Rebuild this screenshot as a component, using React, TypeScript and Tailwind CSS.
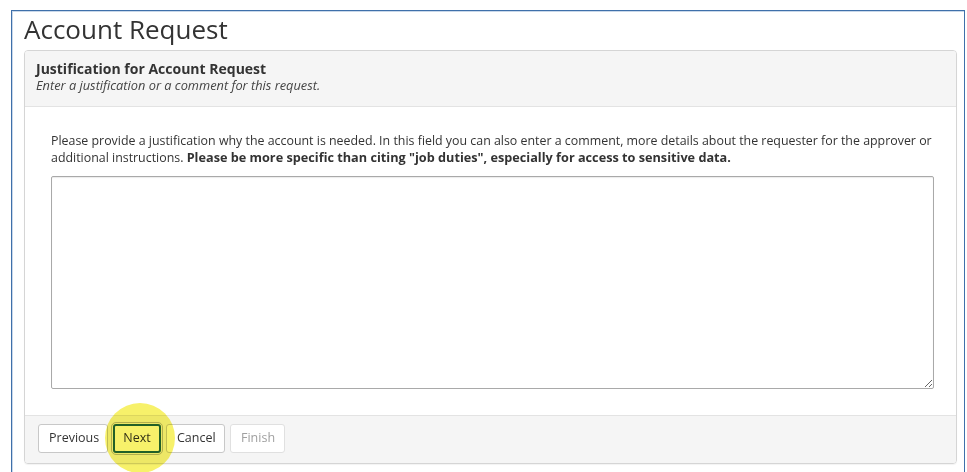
const buttonBase =
  "h-[29px] rounded-[3px] border bg-white px-[10px] text-[12.5px] leading-none";

const App: React.FC = () => {
  return (
    <div
      className="relative h-[472px] w-[967px] overflow-hidden bg-white pl-[11px] pt-[10px] text-[#333]"
      style={{ fontFamily: '"Open Sans", "Liberation Sans", sans-serif' }}
    >
      <div className="h-[480px] w-[954px] border border-b-0 border-[#3f70aa] pl-[12px] pr-[7px] shadow-[inset_1px_1px_0_#c9d8ea]">
        <h1 className="h-[39px] pt-[1px] text-[26px] leading-[34px] font-normal text-[#333]">
          Account Request
        </h1>

        <div className="overflow-hidden rounded-[4px] border border-[#d5d5d5] shadow-[0_1px_1px_rgba(0,0,0,0.05)]">
          {/* step header */}
          <div className="h-[56px] border-b border-[#e3e3e3] bg-[#f5f5f5] px-[11px] pt-[9px]">
            <div className="text-[14px] leading-[18px] font-bold text-[#333]">
              Justification for Account Request
            </div>
            <div className="text-[12.8px] leading-[14px] italic text-[#444]">
              Enter a justification or a comment for this request.
            </div>
          </div>

          {/* step body */}
          <div className="pl-[26px] pr-[22px] pt-[25px] pb-[26px]">
            <p className="mb-[10px] text-[12.4px] leading-[17px] text-[#333]">
              Please provide a justification why the account is needed. In this field you can also enter a comment, more details about the requester for the approver or additional instructions.{" "}
              <strong className="text-[12.7px] font-bold">
                Please be more specific than citing "job duties", especially for access to sensitive data.
              </strong>
            </p>
            <textarea className="block h-[213px] w-full resize-y rounded-[2px] border border-[#a9a9a9] bg-white p-[6px] text-[12px] shadow-[inset_0_1px_1px_rgba(0,0,0,0.08)] outline-none" />
          </div>

          {/* wizard buttons */}
          <div className="flex h-[48px] gap-[5px] border-t border-[#e3e3e3] bg-[#f5f5f5] pl-[13px] pt-[8px]">
            <button className={`${buttonBase} w-[70px] border-[#c8c8c8] text-[#333]`}>
              Previous
            </button>
            <button className="h-[29px] w-[48px] rounded-[3px] border-2 border-[#23655c] bg-white text-[12.5px] leading-none text-[#333] outline outline-1 outline-offset-1 outline-[#b8b8b8]">
              Next
            </button>
            <button className={`${buttonBase} w-[59px] border-[#c8c8c8] text-[#333]`}>
              Cancel
            </button>
            <button className={`${buttonBase} w-[55px] border-[#e0e0e0] text-[#a0a0a0]`}>
              Finish
            </button>
          </div>
        </div>
      </div>

      {/* highlight marker over the Next button */}
      <div className="pointer-events-none absolute left-[105px] top-[403px] h-[70px] w-[70px] rounded-full bg-[#f7f16a] mix-blend-multiply" />
    </div>
  );
};

export default App;
